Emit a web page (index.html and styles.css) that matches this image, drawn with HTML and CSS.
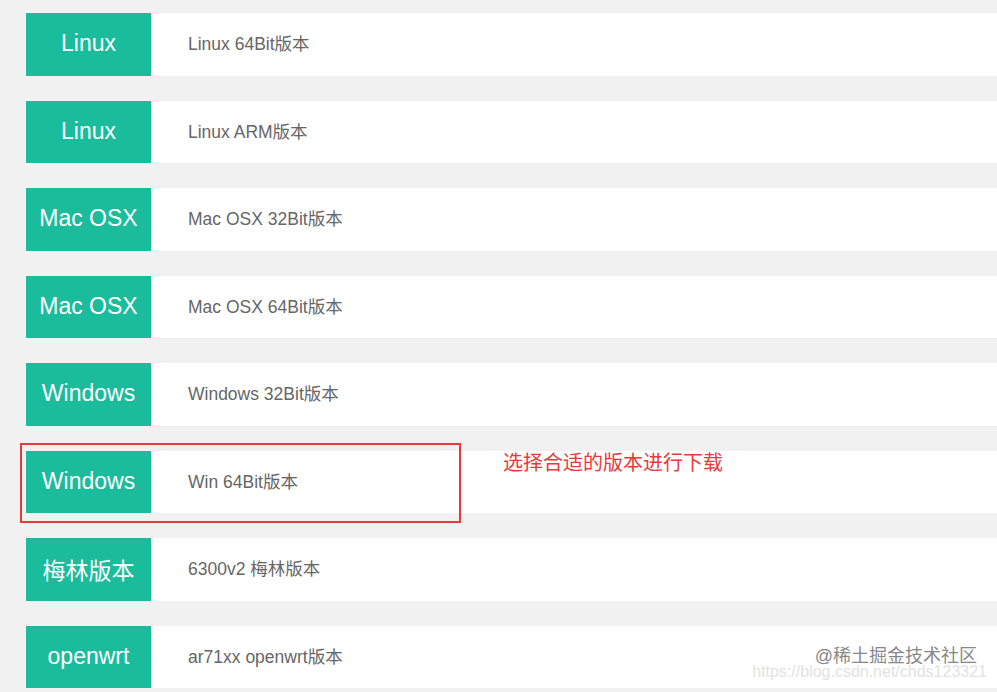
FILE: index.html
```html
<!DOCTYPE html>
<html lang="zh-CN">

<head>
    <meta charset="UTF-8">
    <title>版本下载</title>
    <link rel="stylesheet" href="styles.css">
</head>

<body>
    <div class="list">
        <div class="row"><div class="tag">Linux</div><div class="desc">Linux 64Bit版本</div></div>
        <div class="row"><div class="tag">Linux</div><div class="desc">Linux ARM版本</div></div>
        <div class="row"><div class="tag">Mac OSX</div><div class="desc">Mac OSX 32Bit版本</div></div>
        <div class="row"><div class="tag">Mac OSX</div><div class="desc">Mac OSX 64Bit版本</div></div>
        <div class="row"><div class="tag">Windows</div><div class="desc">Windows 32Bit版本</div></div>
        <div class="row marked">
            <div class="tag">Windows</div><div class="desc">Win 64Bit版本</div>
            <div class="box"></div>
            <div class="note">选择合适的版本进行下载</div>
        </div>
        <div class="row"><div class="tag">梅林版本</div><div class="desc">6300v2 梅林版本</div></div>
        <div class="row"><div class="tag">openwrt</div><div class="desc">ar71xx openwrt版本</div></div>
    </div>
    <div class="watermark">
        <div class="wm-main">@稀土掘金技术社区</div>
        <div class="wm-url">https://blog.csdn.net/chds123321</div>
    </div>
</body>

</html>
```

FILE: styles.css
```css
body {
    margin: 0;
    background-color: #f1f1f1;
    font-family: "Liberation Sans", Arial, "Noto Sans CJK SC", sans-serif;
    width: 997px;
    height: 692px;
    overflow: hidden;
    position: relative;
}
.list {
    padding: 13px 0 0 26px;
    display: flex;
    flex-direction: column;
    gap: 25px;
}
.row {
    display: flex;
    height: 62.5px;
    background-color: #fff;
    position: relative;
}
.tag {
    width: 125px;
    background-color: #1abc9c;
    color: #fff;
    font-size: 23px;
    display: flex;
    align-items: center;
    justify-content: center;
    padding-bottom: 1px;
}
.desc {
    padding: 0 0 3px 37px;
    color: #666;
    font-size: 17.5px;
    display: flex;
    align-items: center;
}
.box {
    position: absolute;
    left: -6px;
    top: -8px;
    width: 437px;
    height: 76px;
    border: 2px solid #e8393b;
}
.note {
    position: absolute;
    left: 477px;
    top: -4px;
    font-size: 20px;
    color: #e8393b;
}
.watermark {
    position: absolute;
    right: 10px;
    bottom: 11px;
    text-align: right;
}
.wm-main {
    font-size: 18px;
    color: #888;
    margin-right: 10px;
    text-shadow: 0 0 1px #fff;
}
.wm-url {
    font-size: 16px;
    color: #e2e2e2;
    margin-top: -4px;
}
```
